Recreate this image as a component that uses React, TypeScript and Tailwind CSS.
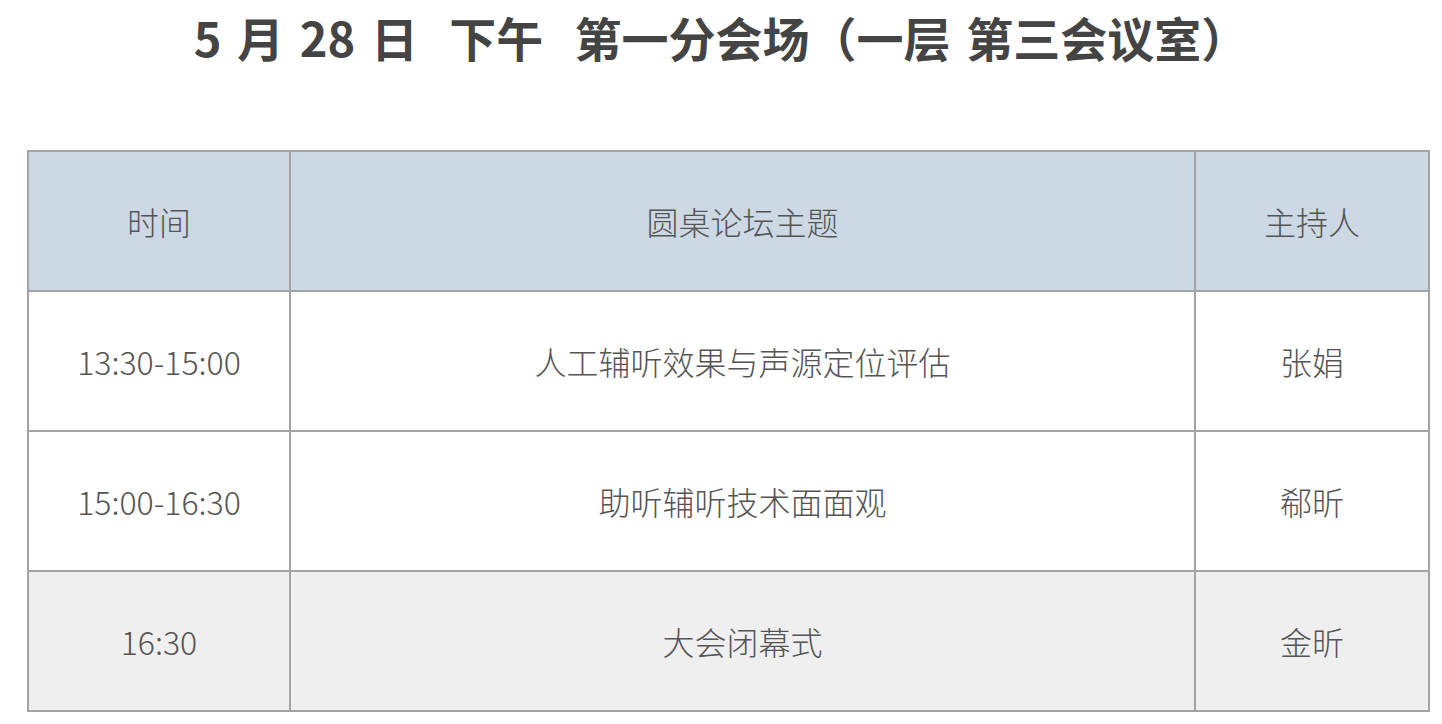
const rows = [
  { time: '13:30-15:00', topic: '人工辅听效果与声源定位评估', host: '张娟', bg: 'bg-white' },
  { time: '15:00-16:30', topic: '助听辅听技术面面观', host: '郗昕', bg: 'bg-white' },
  { time: '16:30', topic: '大会闭幕式', host: '金昕', bg: 'bg-[#efefef]' },
];

export default function App() {
  return (
    <div
      className="w-[1442px] h-[724px] bg-white overflow-hidden"
      style={{ fontFamily: '"Noto Sans CJK SC", "Noto Sans", sans-serif' }}
    >
      <h1 className="h-[74px] flex items-center justify-center text-[47px] font-bold text-[#444444] whitespace-pre [word-spacing:5px]">
        5 月 28 日  下午  第一分会场（一层 第三会议室）
      </h1>
      <div className="pt-[76px] px-[27px]">
        <table className="w-[1401px] border-collapse table-fixed text-[32px] font-light text-[#555555]">
          <colgroup>
            <col className="w-[262px]" />
            <col className="w-[905px]" />
            <col className="w-[234px]" />
          </colgroup>
          <thead>
            <tr className="h-[140px] bg-[#ccd9e5]">
              <th className="border-2 border-[#a3a3a3] font-light">时间</th>
              <th className="border-2 border-[#a3a3a3] font-light">圆桌论坛主题</th>
              <th className="border-2 border-[#a3a3a3] font-light">主持人</th>
            </tr>
          </thead>
          <tbody>
            {rows.map((r) => (
              <tr key={r.time} className={`h-[140px] ${r.bg}`}>
                <td className="border-2 border-[#a3a3a3] text-center">{r.time}</td>
                <td className="border-2 border-[#a3a3a3] text-center">{r.topic}</td>
                <td className="border-2 border-[#a3a3a3] text-center">{r.host}</td>
              </tr>
            ))}
          </tbody>
        </table>
      </div>
    </div>
  );
}
